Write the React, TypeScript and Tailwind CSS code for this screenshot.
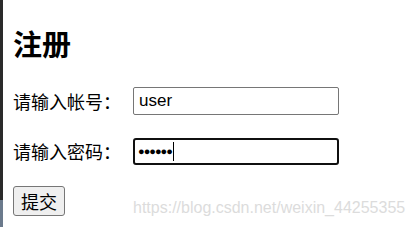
export default function App() {
  return (
    <div className="relative flex h-[227px] w-[414px] overflow-hidden bg-white text-black" style={{ fontFamily: '"Liberation Sans", "Noto Sans CJK SC", sans-serif' }}>
      {/* left edge of the neighbouring window */}
      <div className="flex w-[3px] flex-col">
        <div className="h-[200px] bg-[#2a2a2a]" />
        <div className="flex-1 bg-[#6b7a8c]" />
      </div>

      <div className="flex flex-col pl-[10px] pt-[24px]">
        <h1 className="text-[29px] font-bold leading-[38px]" style={{ fontFamily: '"Noto Sans CJK SC", sans-serif' }}>
          注册
        </h1>

        <div className="mt-[25px] flex items-center">
          <label className="w-[120px] text-[18px] leading-[28px]" style={{ fontFamily: '"Noto Sans CJK SC", sans-serif' }}>
            请输入帐号：
          </label>
          <input
            readOnly
            value="user"
            className="h-[28px] w-[206px] rounded-[2px] border border-[#767676] px-[5px] text-[17px] outline-none"
            style={{ fontFamily: '"Liberation Sans", sans-serif' }}
          />
        </div>

        <div className="mt-[22px] flex items-center">
          <label className="w-[120px] text-[18px] leading-[28px]" style={{ fontFamily: '"Noto Sans CJK SC", sans-serif' }}>
            请输入密码：
          </label>
          <div className="flex h-[27px] w-[206px] items-center rounded-[3px] border-2 border-[#101010] pl-[3px]">
            <span className="text-[11px] tracking-[-1px]" style={{ fontFamily: '"Liberation Sans", sans-serif' }}>
              ●●●●●●
            </span>
            <span className="ml-[1px] h-[19px] w-px bg-black" />
          </div>
        </div>

        <div className="mt-[21px]">
          <button className="h-[30px] w-[52px] rounded-[3px] border border-[#767676] bg-[#efefef] text-[18px] leading-none" style={{ fontFamily: '"Noto Sans CJK SC", sans-serif' }}>
            提交
          </button>
        </div>
      </div>

      {/* blog watermark */}
      <span className="pointer-events-none absolute left-[133px] top-[198px] whitespace-nowrap text-[16px] leading-[20px] text-[#dcdcdc]" style={{ fontFamily: '"Liberation Sans", sans-serif' }}>
        https://blog.csdn.net/weixin_44255355
      </span>
    </div>
  );
}
